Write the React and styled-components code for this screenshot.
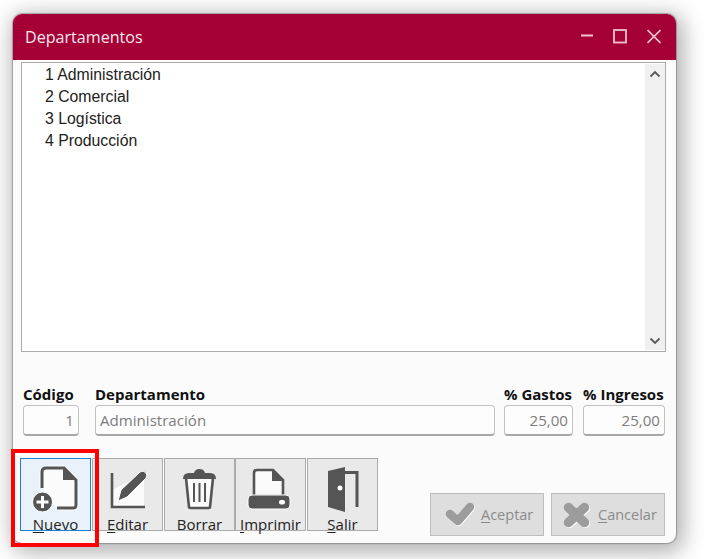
import React from 'react';
import styled, { createGlobalStyle } from 'styled-components';

const Global = createGlobalStyle`
  html, body { margin: 0; padding: 0; background: #fff; }
  body { width: 704px; height: 559px; overflow: hidden; }
`;
const uiFont = `"Open Sans", "Noto Sans", "Liberation Sans", sans-serif`;

const Page = styled.div`
  position: relative;
  width: 704px;
  height: 559px;
  padding: 14px 0 0 13px;
  box-sizing: border-box;
  font-family: ${uiFont};
`;
const Win = styled.div`
  width: 663px;
  height: 529px;
  box-sizing: border-box;
  background: #fbfbfb;
  border-radius: 9px;
  overflow: hidden;
  box-shadow: 0 0 1px 1px rgba(90,90,90,.45), 3px 5px 22px 4px rgba(0,0,0,.32);
  display: flex;
  flex-direction: column;
`;
const TitleBar = styled.div`
  height: 46px;
  flex: none;
  background: #a50036;
  color: #f7e8ee;
  display: flex;
  align-items: center;
  justify-content: space-between;
  padding: 0 15px 0 12px;
  font-size: 16.1px;
`;
const WinControls = styled.div`
  display: flex;
  align-items: center;
  gap: 20px;
`;
const Content = styled.div`
  flex: 1;
  padding: 2px 10px 7px 8px;
  display: flex;
  flex-direction: column;
`;
const ListBox = styled.div`
  height: 290px;
  box-sizing: border-box;
  border: 1px solid #ababab;
  background: #fff;
  display: flex;
  justify-content: space-between;
  flex: none;
`;
const Items = styled.ul`
  list-style: none;
  margin: 0;
  padding: 1px 0 0 23px;
  font-family: "Liberation Sans", Arial, sans-serif;
  font-size: 15.8px;
  color: #222;
`;
const Item = styled.li`
  height: 22px;
  line-height: 22px;
`;
const ScrollBar = styled.div`
  width: 20px;
  background: #f0f0f0;
  display: flex;
  flex-direction: column;
  justify-content: space-between;
  align-items: center;
  padding: 5px 0 4px;
  margin: 1px 0;
  box-sizing: border-box;
`;
const Form = styled.div`
  display: flex;
  margin-top: 33px;
  padding-left: 2px;
`;
const Field = styled.div`
  width: ${p => p.$w}px;
  margin-left: ${p => p.$ml || 0}px;
  flex: none;
`;
const Label = styled.div`
  font-size: 15px;
  font-weight: 700;
  color: #111;
  height: 20px;
  line-height: 18px;
  white-space: nowrap;
`;
const Input = styled.div`
  height: 31px;
  box-sizing: border-box;
  border: 1px solid #c2c2c2;
  border-bottom: 2px solid #a8a8a8;
  border-radius: 4px;
  background: #fdfdfd;
  color: #7c7c7c;
  font-size: 15.1px;
  line-height: 29px;
  padding: 0 4px;
  text-align: ${p => (p.$right ? 'right' : 'left')};
`;
const Footer = styled.div`
  display: flex;
  justify-content: space-between;
  margin-top: 22px;
  height: 78px;
`;
const Toolbar = styled.div`
  display: flex;
  gap: 1px;
  margin-left: -1px;
`;
const ToolButton = styled.div`
  width: 71px;
  height: 73px;
  box-sizing: border-box;
  border: 1px solid ${p => (p.$active ? '#1a80d6' : '#ababab')};
  background: ${p => (p.$active ? '#e9f2fa' : '#e9e9e9')};
  display: flex;
  flex-direction: column;
  align-items: center;
  margin-left: ${p => p.$ml || 0}px;
`;
const ToolIcon = styled.svg`
  width: 71px;
  height: 56px;
  flex: none;
  margin: -1px;
`;
const ToolText = styled.div`
  font-size: 15px;
  line-height: 18px;
  color: #222;
  margin-top: 2px;
  white-space: nowrap;
`;
const Key = styled.span`
  text-decoration: underline;
  text-underline-offset: 2px;
`;
const Actions = styled.div`
  display: flex;
  gap: 7px;
  align-self: flex-end;
  margin-right: 1px;
`;
const ActionButton = styled.div`
  width: 114px;
  height: 43px;
  box-sizing: border-box;
  border: 1px solid #bdbdbd;
  background: #dedede;
  color: #8b8b8b;
  font-size: 14.5px;
  display: flex;
  align-items: center;
`;
const ActionIcon = styled.svg`
  width: ${p => p.$w}px;
  height: 41px;
  flex: none;
`;
const Highlight = styled.div`
  position: absolute;
  left: 11px;
  top: 449px;
  width: 88px;
  height: 98px;
  box-sizing: border-box;
  border: 4px solid #fe0000;
  pointer-events: none;
`;

const G = '#555555';

const NuevoIcon = () => (
  <ToolIcon viewBox="0 0 71 56">
    <path d="M22 30V14q0-4 4-4h18l12 12v25q0 3-3 3H37" fill="#fbfbfb" stroke="#fff" strokeWidth="5" />
    <path d="M22 30V14q0-4 4-4h18l12 12v25q0 3-3 3H37" fill="#fbfbfb" stroke={G} strokeWidth="3" />
    <path d="M43 9l14 13H43z" fill={G} />
    <circle cx="22.500" cy="44" r="10" fill={G} stroke="#fff" strokeWidth="1" />
    <path d="M16.500 44h12M22.500 38v12" stroke="#fff" strokeWidth="3" />
  </ToolIcon>
);
const EditarIcon = () => (
  <ToolIcon viewBox="0 0 71 56">
    <path d="M20 32L52 16V50H20z" fill="#fbfbfb" />
    <path d="M20 15V49H53" fill="none" stroke={G} strokeWidth="2.600" />
    <path d="M26 43l3-11 19-18q3-2 5.500 0.500t0.500 5.500l-19 19z" fill={G} stroke="#fff" strokeWidth="1" />
  </ToolIcon>
);
const BorrarIcon = () => (
  <ToolIcon viewBox="0 0 71 56">
    <path d="M22 20l3 29q0 1 2 1h17q2 0 2-1l3-29" fill="#fbfbfb" stroke={G} strokeWidth="2.600" />
    <path d="M19 21q0-6 6-6h5q1-4 5.500-4t5.500 4h5q6 0 6 6z" fill={G} />
    <path d="M30 25v19M35.500 25v19M41 25v19" stroke={G} strokeWidth="2" />
  </ToolIcon>
);
const ImprimirIcon = () => (
  <ToolIcon viewBox="0 0 71 56">
    <path d="M19 38V15q0-3 3-3h16l10 10v16z" fill="#fbfbfb" stroke={G} strokeWidth="2.600" />
    <path d="M37 11l12 12H37z" fill={G} />
    <rect x="13" y="37" width="42" height="14" rx="4" fill={G} stroke="#fff" strokeWidth="1" />
    <rect x="44" y="42" width="6" height="4.500" rx="2" fill="#fff" />
  </ToolIcon>
);
const SalirIcon = () => (
  <ToolIcon viewBox="0 0 71 56">
    <path d="M21 13L38 9V54L21 49z" fill={G} />
    <path d="M38 14.500H50V49" fill="none" stroke={G} strokeWidth="3" />
    <circle cx="33" cy="30" r="2.500" fill="#fff" />
  </ToolIcon>
);

const Chevron = ({ up }) => (
  <svg width="12" height="10" viewBox="0 0 12 10">
    <path d={up ? 'M1.500 7.500L6 3l4.500 4.500' : 'M1.500 2.500L6 7l4.500-4.500'} fill="none" stroke="#5a5a5a" strokeWidth="1.800" />
  </svg>
);

export default function App() {
  return (
    <>
      <Global />
      <Page>
        <Win>
          <TitleBar>
            <span>Departamentos</span>
            <WinControls>
              <svg width="12" height="16" viewBox="0 0 12 16">
                <path d="M0 6.500H12" stroke="#eec4d2" strokeWidth="2" />
              </svg>
              <svg width="14" height="16" viewBox="0 0 14 16">
                <rect x="1" y="1" width="12" height="12.500" fill="none" stroke="#eec4d2" strokeWidth="1.800" />
              </svg>
              <svg width="14" height="16" viewBox="0 0 14 16">
                <path d="M0.500 1L13.500 14M13.500 1L0.500 14" stroke="#eec4d2" strokeWidth="1.700" />
              </svg>
            </WinControls>
          </TitleBar>
          <Content>
            <ListBox>
              <Items>
                <Item>1 Administración</Item>
                <Item>2 Comercial</Item>
                <Item>3 Logística</Item>
                <Item>4 Producción</Item>
              </Items>
              <ScrollBar>
                <Chevron up />
                <Chevron />
              </ScrollBar>
            </ListBox>
            <Form>
              <Field $w={56}>
                <Label>Código</Label>
                <Input $right>1</Input>
              </Field>
              <Field $w={400} $ml={16}>
                <Label>Departamento</Label>
                <Input>Administración</Input>
              </Field>
              <Field $w={69} $ml={9}>
                <Label>% Gastos</Label>
                <Input $right>25,00</Input>
              </Field>
              <Field $w={82} $ml={10}>
                <Label>% Ingresos</Label>
                <Input $right>25,00</Input>
              </Field>
            </Form>
            <Footer>
              <Toolbar>
                <ToolButton $active>
                  <NuevoIcon />
                  <ToolText><Key>N</Key>uevo</ToolText>
                </ToolButton>
                <ToolButton>
                  <EditarIcon />
                  <ToolText><Key>E</Key>ditar</ToolText>
                </ToolButton>
                <ToolButton>
                  <BorrarIcon />
                  <ToolText>Borrar</ToolText>
                </ToolButton>
                <ToolButton $ml={-1}>
                  <ImprimirIcon />
                  <ToolText><Key>I</Key>mprimir</ToolText>
                </ToolButton>
                <ToolButton>
                  <SalirIcon />
                  <ToolText><Key>S</Key>alir</ToolText>
                </ToolButton>
              </Toolbar>
              <Actions>
                <ActionButton>
                  <ActionIcon $w={50} viewBox="0 0 50 41">
                    <path d="M19 20l8 7 12-14" fill="none" stroke="#fff" strokeWidth="8.500" strokeLinecap="round" strokeLinejoin="round" transform="translate(.8 .8)" />
                    <path d="M19 20l8 7 12-14" fill="none" stroke="#9c9c9c" strokeWidth="8.500" strokeLinecap="round" strokeLinejoin="round" />
                  </ActionIcon>
                  <span><Key>A</Key>ceptar</span>
                </ActionButton>
                <ActionButton>
                  <ActionIcon $w={46} viewBox="0 0 46 41">
                    <path d="M16.500 13.500l16 15M32.500 13.500l-16 15" fill="none" stroke="#fff" strokeWidth="9.500" strokeLinecap="round" transform="translate(.8 .8)" />
                    <path d="M16.500 13.500l16 15M32.500 13.500l-16 15" fill="none" stroke="#9c9c9c" strokeWidth="9.500" strokeLinecap="round" />
                  </ActionIcon>
                  <span><Key>C</Key>ancelar</span>
                </ActionButton>
              </Actions>
            </Footer>
          </Content>
        </Win>
        <Highlight />
      </Page>
    </>
  );
}
